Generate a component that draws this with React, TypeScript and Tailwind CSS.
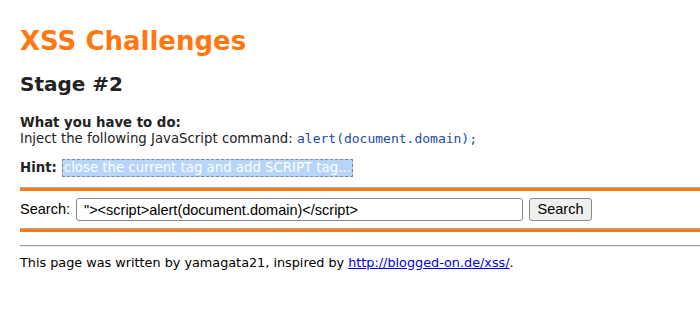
const App = () => {
  return (
    <div className="min-h-[319px] bg-white pl-5 pt-[24px] font-['DejaVu_Sans',sans-serif] text-[#222]">
      <h1 className="text-[26px] font-bold leading-[34px] text-[#ff7711]">XSS Challenges</h1>
      <h2 className="mt-[13px] text-[20px] font-bold leading-[26px] text-[#222]">Stage #2</h2>

      <div className="mt-[18px] text-[13.3px] leading-[16px]">
        <div className="font-bold">What you have to do:</div>
        <div>
          Inject the following JavaScript command:{' '}
          <code className="font-['DejaVu_Sans_Mono',monospace] text-[13px] text-[#1a4aa8]">alert(document.domain);</code>
        </div>
      </div>

      <div className="mt-[12px] flex items-center text-[13.3px] leading-[16px]">
        <span className="font-bold">Hint:</span>
        <span className="ml-[5px] border border-dashed border-[#888] bg-[#b6d5fb] px-px text-white">
          close the current tag and add SCRIPT tag...
        </span>
      </div>

      <div className="mt-[10px] h-[4px] border-t border-[#aaa] bg-[#ff7b16]" />

      <form className="flex items-center py-[7px] font-['Liberation_Sans',Arial,sans-serif] text-[14.5px]">
        <label className="mr-[6px] text-black">Search:</label>
        <input
          defaultValue={'"><script>alert(document.domain)</script>'}
          className="h-[23px] w-[447px] rounded-[3px] border border-[#888] px-[7px] text-[14.5px] text-black outline-none"
        />
        <button
          type="button"
          className="ml-[6px] h-[23px] w-[63px] rounded-[3px] border border-[#888] bg-[#efefef] text-[14.5px] text-black"
        >
          Search
        </button>
      </form>

      <div className="h-[4px] border-t border-[#aaa] bg-[#ff7b16]" />

      <div className="mt-[13px] h-[2px] border-t border-[#999] bg-[#eee]" />

      <p className="mt-[8px] text-[12.8px] leading-[16px] text-black">
        This page was written by yamagata21, inspired by{' '}
        <a href="#" className="text-[#0000ee] underline">
          http://blogged-on.de/xss/
        </a>
        .
      </p>
    </div>
  );
};

export default App;
